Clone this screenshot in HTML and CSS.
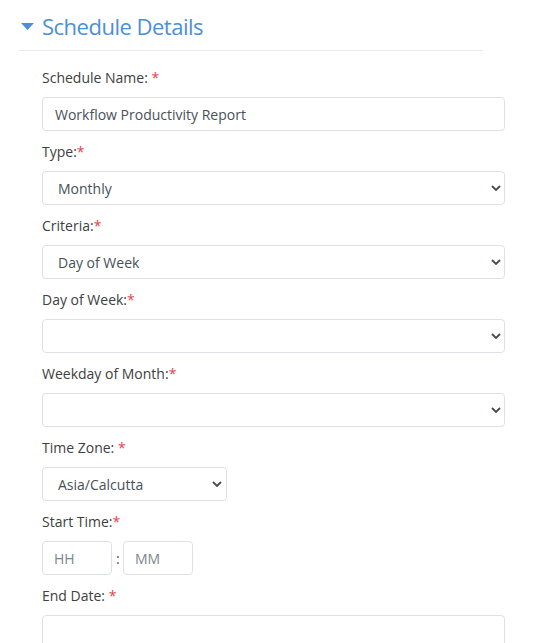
FILE: index.html
```html
<!DOCTYPE html>
<html>
<head>
<meta charset="utf-8">
<link rel="stylesheet" href="styles.css">
</head>
<body>
<div class="panel">
  <h2 class="section-title">
    <svg class="caret" width="13" height="7" viewBox="0 0 13 7"><polygon points="0,0 13,0 6.5,7" fill="#4a90d9"/></svg>
    <span>Schedule Details</span>
  </h2>
  <form class="form">
    <div class="field">
      <label class="label">Schedule Name: <span class="req">*</span></label>
      <input class="control" type="text" value="Workflow Productivity Report">
    </div>
    <div class="field">
      <label class="label">Type:<span class="req">*</span></label>
      <div class="select-wrap">
        <select class="control select"><option>Monthly</option></select>
        <svg class="chev" width="10" height="6" viewBox="0 0 10 6"><polyline points="1,1 5,5 9,1" fill="none" stroke="#454b52" stroke-width="1.8"/></svg>
      </div>
    </div>
    <div class="field">
      <label class="label">Criteria:<span class="req">*</span></label>
      <div class="select-wrap">
        <select class="control select"><option>Day of Week</option></select>
        <svg class="chev" width="10" height="6" viewBox="0 0 10 6"><polyline points="1,1 5,5 9,1" fill="none" stroke="#454b52" stroke-width="1.8"/></svg>
      </div>
    </div>
    <div class="field">
      <label class="label">Day of Week:<span class="req">*</span></label>
      <div class="select-wrap">
        <select class="control select"><option></option></select>
        <svg class="chev" width="10" height="6" viewBox="0 0 10 6"><polyline points="1,1 5,5 9,1" fill="none" stroke="#454b52" stroke-width="1.8"/></svg>
      </div>
    </div>
    <div class="field">
      <label class="label">Weekday of Month:<span class="req">*</span></label>
      <div class="select-wrap">
        <select class="control select"><option></option></select>
        <svg class="chev" width="10" height="6" viewBox="0 0 10 6"><polyline points="1,1 5,5 9,1" fill="none" stroke="#454b52" stroke-width="1.8"/></svg>
      </div>
    </div>
    <div class="field">
      <label class="label">Time Zone: <span class="req">*</span></label>
      <div class="select-wrap tz">
        <select class="control select"><option>Asia/Calcutta</option></select>
        <svg class="chev" width="10" height="6" viewBox="0 0 10 6"><polyline points="1,1 5,5 9,1" fill="none" stroke="#454b52" stroke-width="1.8"/></svg>
      </div>
    </div>
    <div class="field">
      <label class="label">Start Time:<span class="req">*</span></label>
      <div class="time-row">
        <input class="control time" type="text" placeholder="HH">
        <span class="colon">:</span>
        <input class="control time" type="text" placeholder="MM">
      </div>
    </div>
    <div class="field">
      <label class="label">End Date: <span class="req">*</span></label>
      <input class="control" type="text">
    </div>
  </form>
</div>
</body>
</html>
```

FILE: styles.css
```css
* { box-sizing: border-box; }
html, body { margin: 0; padding: 0; background: #fff; }
body {
  font-family: "Open Sans", "Noto Sans", sans-serif;
  font-size: 14px;
  color: #404040;
}
.panel { padding-left: 19px; }
.section-title {
  width: 464px;
  margin: 0;
  padding: 11px 0 9px 2px;
  display: flex;
  align-items: center;
  gap: 8px;
  font-size: 22px;
  line-height: 30px;
  font-weight: 400;
  letter-spacing: -0.5px;
  color: #4a90d9;
  border-bottom: 1px solid #e6e8ea;
}
.caret { display: block; flex: none; }
.form {
  margin-left: 23px;
  width: 463px;
  padding-top: 17px;
}
.field { margin-bottom: 11px; }
.label {
  display: block;
  line-height: 20px;
  margin-bottom: 9px;
  color: #404040;
}
.req { color: #e3444a; }
.control {
  display: block;
  width: 100%;
  height: 34px;
  border: 1px solid #dde1e6;
  border-radius: 4px;
  background: #fff;
  font-family: inherit;
  font-size: 14px;
  color: #495057;
  padding: 0 12px;
  outline: none;
}
.select-wrap { position: relative; }
.select {
  -webkit-appearance: none;
  appearance: none;
  padding-left: 15px;
}
.chev {
  position: absolute;
  right: 4px;
  top: 14px;
}
.tz { width: 185px; }
.tz .chev { right: 5px; }
.time-row {
  display: flex;
  align-items: center;
  gap: 4px;
}
.time { width: 70px; padding-left: 11px; }
.time::placeholder { color: #7d858c; }
.colon { color: #495057; width: 3px; }
```
